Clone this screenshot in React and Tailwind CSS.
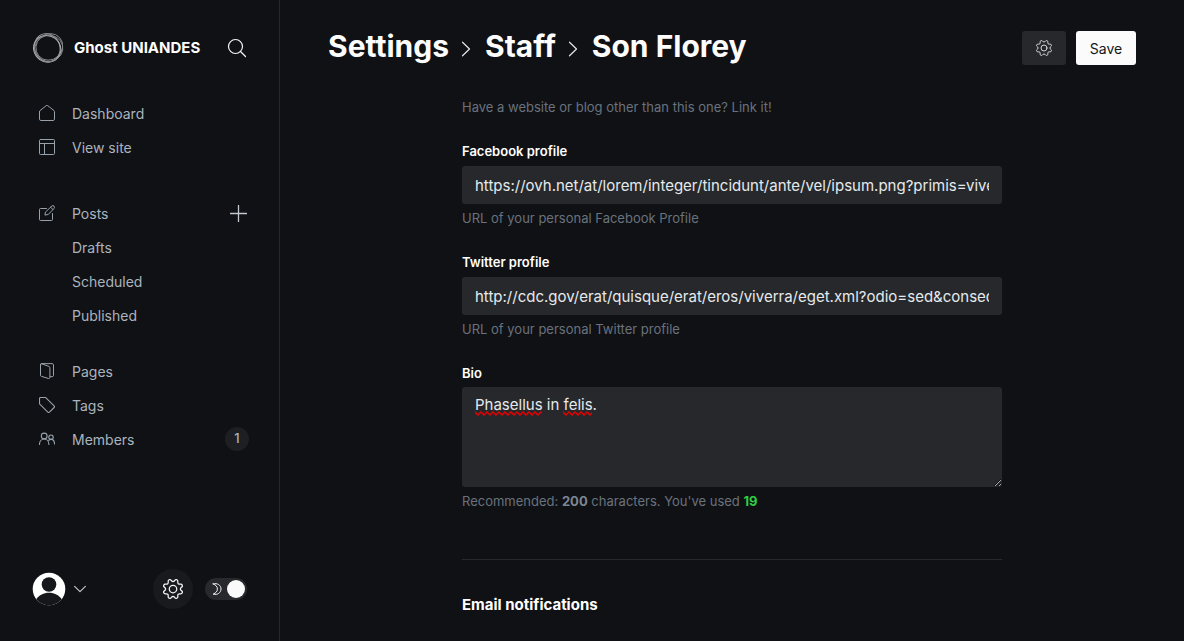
import React from 'react';

function Icon({ size = 16, box = 24, width = 1.5, className = '', children }) {
  return (
    <svg
      width={size}
      height={size}
      viewBox={`0 0 ${box} ${box}`}
      fill="none"
      stroke="currentColor"
      strokeWidth={width}
      strokeLinecap="round"
      strokeLinejoin="round"
      className={`shrink-0 ${className}`}
      aria-hidden="true"
    >
      {children}
    </svg>
  );
}

const GearShape = () => (
  <>
    <path d="M10.546 2.438a1.957 1.957 0 0 0 2.908 0L14.4 1.4a1.959 1.959 0 0 1 3.41 1.413l-.071 1.4a1.958 1.958 0 0 0 2.051 2.054l1.4-.071a1.959 1.959 0 0 1 1.41 3.41l-1.042.94a1.96 1.96 0 0 0 0 2.909l1.042.94a1.959 1.959 0 0 1-1.413 3.41l-1.4-.071a1.958 1.958 0 0 0-2.056 2.056l.071 1.4A1.959 1.959 0 0 1 14.4 22.6l-.941-1.041a1.959 1.959 0 0 0-2.908 0L9.6 22.6a1.959 1.959 0 0 1-3.41-1.413l.071-1.4a1.958 1.958 0 0 0-2.056-2.056l-1.4.071A1.958 1.958 0 0 1 1.4 14.4l1.041-.94a1.96 1.96 0 0 0 0-2.909L1.4 9.6a1.958 1.958 0 0 1 1.413-3.41l1.4.071a1.958 1.958 0 0 0 2.056-2.05l-.071-1.4A1.959 1.959 0 0 1 9.6 1.4z" />
    <circle cx="12" cy="12" r="4.5" />
  </>
);

const HouseIcon = () => (
  <Icon box={16} width={1}>
    <path d="M.5 6.6v7.6c0 .7.6 1.3 1.3 1.3h12.4c.7 0 1.3-.6 1.3-1.3V6.6c0-.4-.2-.8-.5-1L8.8.7a1.3 1.3 0 0 0-1.6 0L1 5.6c-.3.2-.5.6-.5 1z" />
  </Icon>
);
const LayoutIcon = () => (
  <Icon box={16} width={1}>
    <rect x=".5" y=".5" width="15" height="15" rx="1" />
    <path d="M.5 4.5h15M5.5 4.5v11" />
  </Icon>
);
const PostIcon = () => (
  <Icon box={16} width={1}>
    <path d="M13.500 8.500v6a1 1 0 0 1-1 1h-11a1 1 0 0 1-1-1v-10a1 1 0 0 1 1-1h6" />
    <path d="M9 9.500 5.900 10.100l.6-3.100L12.900 1a1.600 1.600 0 0 1 2.200 2.300zM11.600 2.200 13.900 4.500" />
  </Icon>
);
const PagesIcon = () => (
  <Icon box={16} width={1}>
    <path d="M1.500 1.500v10.800c0 .5.300.9.800 1l7.200 2.200c.7.200 1.400-.3 1.400-1V4.700c0-.6-.4-1.100-.9-1.300L2.800.9c-.7-.2-1.300 0-1.300.6z" />
    <path d="M2.200.6h11c.7 0 1.300.5 1.300 1.200v10.600c0 .7-.6 1.300-1.300 1.300h-2.100" />
  </Icon>
);
const TagIcon = () => (
  <Icon box={16} width={1.100}>
    <path d="M1.500.5h4.800c.3 0 .5.100.7.300l8.100 8c.5.500.5 1.200 0 1.700L10.500 15.100c-.5.500-1.200.5-1.700 0L.8 7.200a1 1 0 0 1-.3-.7v-5a1 1 0 0 1 1-1z" />
  </Icon>
);
const MembersIcon = () => (
  <Icon box={16} width={1.100}>
    <circle cx="5.200" cy="5" r="2.900" />
    <path d="M.5 13.500c0-3.200 2-5.500 4.700-5.500s4.700 2.300 4.700 5.500" />
    <circle cx="12" cy="6.200" r="2.200" />
    <path d="M9.700 9.400c.6-.6 1.400-1 2.300-1 2.100 0 3.500 1.800 3.500 4.600" />
  </Icon>
);

function NavLink({ icon, children }) {
  return (
    <a href="#" className="flex h-[34px] flex-1 items-center gap-[17px] text-[14px] text-[#abb4be]">
      <span className="flex w-4 text-[#98a2ac]">{icon}</span>
      {children}
    </a>
  );
}

function Sidebar() {
  return (
    <aside className="flex w-[280px] shrink-0 flex-col border-r border-[#25272b] px-8">
      <div className="mt-8 flex h-8 items-center">
        <svg width="32" height="32" viewBox="0 0 32 32" fill="none" className="shrink-0" aria-hidden="true">
          <ellipse cx="15.200" cy="16.800" rx="13.900" ry="13" transform="rotate(35 15.200 16.800)" stroke="#b4b5b6" strokeWidth="1.100" />
          <ellipse cx="17.300" cy="14.900" rx="13.900" ry="12.800" transform="rotate(-42 17.300 14.900)" stroke="#8c8e90" strokeWidth=".9" />
          <ellipse cx="15.200" cy="15.600" rx="14.200" ry="12.600" transform="rotate(66 15.200 15.600)" stroke="#a2a4a6" strokeWidth=".9" />
          <ellipse cx="16.700" cy="16.600" rx="14.200" ry="13.200" transform="rotate(-15 16.700 16.600)" stroke="#85878a" strokeWidth=".9" />
        </svg>
        <span className="ml-[10px] flex-1 whitespace-nowrap text-[15px] font-bold text-white">Ghost UNIANDES</span>
        <button type="button" aria-label="Search" className="flex size-5 items-center justify-center text-[#f4f5f6]">
          <Icon size={20} box={20} width={1.200}>
            <circle cx="8.500" cy="8.500" r="7" />
            <path d="m13.500 13.500 5 5" />
          </Icon>
        </button>
      </div>

      <nav className="mt-8 pl-[7px]">
        <div className="flex"><NavLink icon={<HouseIcon />}>Dashboard</NavLink></div>
        <div className="flex"><NavLink icon={<LayoutIcon />}>View site</NavLink></div>
        <div className="mt-8 flex items-center">
          <NavLink icon={<PostIcon />}>Posts</NavLink>
          <button type="button" aria-label="New post" className="flex size-[17px] text-[#c3c8ce]">
            <Icon size={17} box={17} width={1.300}><path d="M8.500.5v16M.5 8.500h16" /></Icon>
          </button>
        </div>
        <div className="flex"><NavLink>Drafts</NavLink></div>
        <div className="flex"><NavLink>Scheduled</NavLink></div>
        <div className="flex"><NavLink>Published</NavLink></div>
        <div className="mt-[22px] flex"><NavLink icon={<PagesIcon />}>Pages</NavLink></div>
        <div className="flex"><NavLink icon={<TagIcon />}>Tags</NavLink></div>
        <div className="flex items-center">
          <NavLink icon={<MembersIcon />}>Members</NavLink>
          <span className="-mr-[2px] flex size-6 items-center justify-center rounded-full bg-[#1e1f23] text-[13px] font-medium text-[#abb4be]">1</span>
        </div>
      </nav>

      <div className="mt-auto mb-8 flex items-center">
        <button type="button" aria-label="Account" className="flex items-center gap-2 text-[#c8cbcf]">
          <svg width="34" height="34" viewBox="0 0 34 34" aria-hidden="true">
            <defs>
              <clipPath id="avatar-clip"><circle cx="17" cy="17" r="16.300" /></clipPath>
            </defs>
            <g clipPath="url(#avatar-clip)">
              <rect width="34" height="34" fill="#fff" />
              <circle cx="17" cy="12.500" r="7.300" fill="#15171a" />
              <path d="M0 34v-6.500h4C7.500 23 11.500 20.800 17 20.800s9.500 2.200 13 6.700h4V34z" fill="#15171a" />
            </g>
          </svg>
          <Icon size={12} box={12} width={1.100}><path d="m.6 3.300 5.400 5.400 5.400-5.400" /></Icon>
        </button>
        <button type="button" aria-label="Settings" className="ml-auto flex size-10 items-center justify-center rounded-full bg-[#191a1e] text-[#f4f5f6]">
          <Icon size={20}><GearShape /></Icon>
        </button>
        <button type="button" role="switch" aria-checked="true" aria-label="Dark mode" className="ml-3 flex h-[22px] w-[42px] items-center justify-between rounded-full bg-[#27292d] pr-[2px] pl-[6px] text-[#f4f5f6]">
          <Icon size={12} box={12} width={1}>
            <path d="M2.200.9C6.500-.4 10 2.400 10 6s-3.500 6.400-7.800 5.100C5 10 6.400 8.200 6.400 6S5 2 2.200.9z" />
          </Icon>
          <span className="size-[18px] rounded-full bg-[#fafafa]" />
        </button>
      </div>
    </aside>
  );
}

const Separator = () => (
  <Icon size={16} box={16} width={1.200} className="mr-[11px] ml-[9px] mt-[6px] text-[#e4e6e8]">
    <path d="m4.500 1.200 7 6.800-7 6.800" />
  </Icon>
);

function TextField({ id, label, value, hint }) {
  return (
    <div className="mt-6">
      <label htmlFor={id} className="block text-[13px] leading-5 font-semibold text-white">{label}</label>
      <input
        id={id}
        type="text"
        defaultValue={value}
        className="mt-[5px] block h-[38px] w-full rounded-[3px] bg-[#27282c] px-[13px] text-[15px] text-[#e5eaed] outline-none"
      />
      <p className="mt-1 text-[13px] leading-5 text-[#69727e]">{hint}</p>
    </div>
  );
}

const Squiggle = ({ width, className }) => (
  <svg width={width} height="5" className={`pointer-events-none absolute ${className}`} aria-hidden="true">
    <defs>
      <pattern id={`wave-${width}`} width="6" height="5" patternUnits="userSpaceOnUse">
        <path d="M-1.500 2.500 0 1 3 4 6 1 7.500 2.500" fill="none" stroke="#e60000" strokeWidth="1.500" />
      </pattern>
    </defs>
    <rect width={width} height="5" fill={`url(#wave-${width})`} />
  </svg>
);

export default function App() {
  return (
    <div className="flex min-h-screen bg-[#101114] font-['Inter','Liberation_Sans',sans-serif]">
      <Sidebar />
      <main className="min-w-0 flex-1 px-12">
        <header className="flex h-24 items-center justify-between">
          <h1 className="flex items-center pb-1 text-[30px] font-bold whitespace-nowrap text-[#fdfdfd]">
            <a href="#">Settings</a>
            <Separator />
            <a href="#">Staff</a>
            <Separator />
            <span>Son Florey</span>
          </h1>
          <div className="flex gap-[10px]">
            <button type="button" aria-label="Actions" className="flex h-[34px] w-11 items-center justify-center rounded-[3px] bg-[#27282c] text-[#d3d6d9]">
              <Icon size={16}><GearShape /></Icon>
            </button>
            <button type="button" className="h-[34px] w-[60px] rounded-[3px] bg-[#fbfbfb] text-[14px] text-[#15171a]">Save</button>
          </div>
        </header>

        <form className="mx-auto max-w-[540px]">
          <p className="pt-px text-[13px] leading-5 text-[#69727e]">Have a website or blog other than this one? Link it!</p>
          <TextField
            id="facebook"
            label="Facebook profile"
            value="https://ovh.net/at/lorem/integer/tincidunt/ante/vel/ipsum.png?primis=viverra"
            hint="URL of your personal Facebook Profile"
          />
          <TextField
            id="twitter"
            label="Twitter profile"
            value="http://cdc.gov/erat/quisque/erat/eros/viverra/eget.xml?odio=sed&consequat"
            hint="URL of your personal Twitter profile"
          />
          <div className="mt-6">
            <label htmlFor="bio" className="block text-[13px] leading-5 font-semibold text-white">Bio</label>
            <div className="relative mt-1">
              <textarea
                id="bio"
                defaultValue="Phasellus in felis."
                className="block h-[100px] w-full resize-y rounded-[3px] bg-[#27282c] px-[13px] py-[6px] text-[15px] leading-6 text-[#e5eaed] outline-none"
              />
              <Squiggle width={67} className="top-6 left-[13px]" />
              <Squiggle width={29} className="top-6 left-[101px]" />
            </div>
            <p className="mt-1 text-[13px] leading-5 text-[#69727e]">
              Recommended: <b className="font-bold text-[#7c8693]">200</b> characters. You've used{' '}
              <b className="font-bold text-[#30cf43]">19</b>
            </p>
          </div>
          <hr className="mt-12 border-[#27292d]" />
          <h2 className="mt-[33px] text-[15px] leading-6 font-bold text-white">Email notifications</h2>
        </form>
      </main>
    </div>
  );
}
